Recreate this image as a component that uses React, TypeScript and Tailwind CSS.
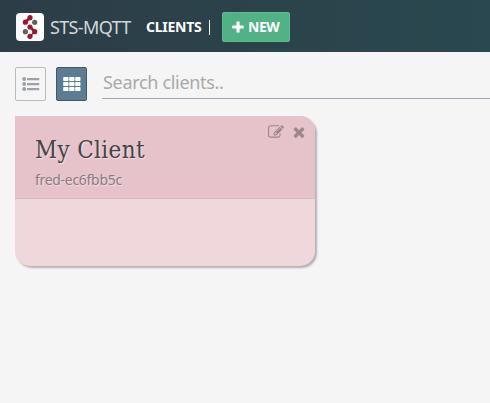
import React from "react";

const molecule: [number, number, string][] = [
  [14, 4.7, "#9b1734"], [9.4, 9.2, "#9b1734"], [18.7, 9.3, "#5f6062"],
  [14, 14, "#9b1734"], [9.4, 18.7, "#5f6062"], [18.7, 18.7, "#9b1734"], [14, 23.3, "#9b1734"],
];

function Logo() {
  return (
    <svg width="28" height="28" viewBox="0 0 28 28" className="rounded-[4px] bg-white">
      <path d="M14 4.7L9.4 9.2M14 14L18.7 18.7" fill="none" stroke="#9b1734" strokeWidth="2.6" />
      <path d="M18.7 18.7L14 23.3" fill="none" stroke="#9b1734" strokeWidth="1.2" />
      {molecule.map(([x, y, fill], i) => (
        <circle key={i} cx={x} cy={y} r="2.6" fill={fill} />
      ))}
    </svg>
  );
}

function ListIcon() {
  return (
    <svg width="18" height="14" viewBox="0 0 18 14" fill="#9ba2a9">
      {[1, 6, 11].map((y) => (
        <g key={y}>
          <circle cx="2.2" cy={y + 1} r="2" />
          <rect x="5" y={y} width="12.3" height="2.3" rx=".3" />
        </g>
      ))}
    </svg>
  );
}

function GridIcon() {
  return (
    <svg width="18" height="14" viewBox="0 0 18 14" fill="#fff">
      {[0, 5, 10].map((y) =>
        [0, 6, 12].map((x) => <rect key={`${x}-${y}`} x={x + 0.2} y={y} width="5.3" height="4.1" rx=".8" />)
      )}
    </svg>
  );
}

function EditIcon() {
  return (
    <svg width="16" height="16" viewBox="0 0 1792 1792" fill="currentColor">
      <path d="M888 1184l116-116-152-152-116 116v56h96v96h56zm440-720q-16-16-33 1l-350 350q-17 17-1 33t33-1l350-350q17-17 1-33zm80 594v190q0 119-84.5 203.5t-203.5 84.5h-832q-119 0-203.5-84.5t-84.5-203.5v-832q0-119 84.5-203.5t203.5-84.5h832q63 0 117 25 15 7 18 23 3 17-9 29l-49 49q-14 14-32 8-23-6-45-6h-832q-66 0-113 47t-47 113v832q0 66 47 113t113 47h832q66 0 113-47t47-113v-126q0-13 9-22l64-64q15-15 35-7t20 29zm-96-738l288 288-672 672h-288v-288zm444 132l-92 92-288-288 92-92q28-28 68-28t68 28l152 152q28 28 28 68t-28 68z" />
    </svg>
  );
}

function CloseIcon() {
  return (
    <svg width="16" height="16" viewBox="0 0 1792 1792" fill="currentColor">
      <path d="M1490 1322q0 40-28 68l-136 136q-28 28-68 28t-68-28l-294-294-294 294q-28 28-68 28t-68-28l-136-136q-28-28-28-68t28-68l294-294-294-294q-28-28-28-68t28-68l136-136q28-28 68-28t68 28l294 294 294-294q28-28 68-28t68 28l136 136q28 28 28 68t-28 68l-294 294 294 294q28 28 28 68z" />
    </svg>
  );
}

export default function App() {
  return (
    <div className="h-[403px] w-full overflow-hidden bg-[#f5f5f5] font-['Noto_Sans',sans-serif]">
      <header className="flex h-[52px] items-center bg-linear-to-r from-[#2d3d47] to-[#29484f] pt-[2px] pl-4 whitespace-nowrap">
        <Logo />
        <span className="ml-1.5 w-24 text-[18px] leading-6 tracking-[-0.65px] text-[#d3d8da]">STS-MQTT</span>
        <span className="w-[63px] text-[14px] leading-5 font-bold tracking-[-0.25px] text-white">CLIENTS</span>
        <span className="h-[15px] w-px bg-white" />
        <button className="ml-3 flex h-[30px] w-[68px] items-center rounded-[2px] border border-[#5abf8e] bg-[#52b286] pb-px pl-[9px] text-[14px] font-bold tracking-[-0.5px] text-white">
          <svg width="12" height="12" viewBox="0 0 12 12" className="mr-1 shrink-0" fill="#fff">
            <rect x="4.4" y=".5" width="3.2" height="11" rx=".6" />
            <rect x=".3" y="4.4" width="11.4" height="3.2" rx=".6" />
          </svg>
          NEW
        </button>
      </header>

      <div className="flex pt-[15px] pl-[15px]">
        <button className="flex h-[34px] w-[31px] items-center justify-center rounded-[2px] border border-[#bbbbbb]">
          <ListIcon />
        </button>
        <button className="ml-2.5 flex h-[34px] w-[31px] items-center justify-center rounded-[2px] border border-[#3f586b] bg-[#5b7c92]">
          <GridIcon />
        </button>
        <div className="ml-[15px] h-8 grow border-b border-[#9aa5b1] pl-px text-[18px] leading-[31px] tracking-[-0.32px] text-[#a9a9a9]">
          Search clients..
        </div>
      </div>

      <section className="mt-[15px] ml-[15px] h-[150px] w-[300px] overflow-hidden rounded-[15px] rounded-tl-none bg-[#efd7db] shadow-[2px_2px_2px_rgba(0,0,0,0.27)]">
        <div className="flex h-[83px] justify-between border-b border-[#cfbcc0] bg-[#e6c3ca] pl-5">
          <div className="pt-[18px] [text-shadow:1px_1px_1px_rgba(255,255,255,0.5)]">
            <h2 className="font-['Roboto_Slab','DejaVu_Serif_Condensed','DejaVu_Serif',serif] text-2xl leading-8 tracking-[0.35px] text-[#444] whitespace-nowrap">My Client</h2>
            <p className="mt-[5px] text-[14px] leading-[18px] tracking-[-0.3px] text-[#8c7b7e]">fred-ec6fbb5c</p>
          </div>
          <div className="flex h-8 items-center gap-[7px] pr-2 text-[#9b888c]">
            <EditIcon />
            <CloseIcon />
          </div>
        </div>
      </section>
    </div>
  );
}
